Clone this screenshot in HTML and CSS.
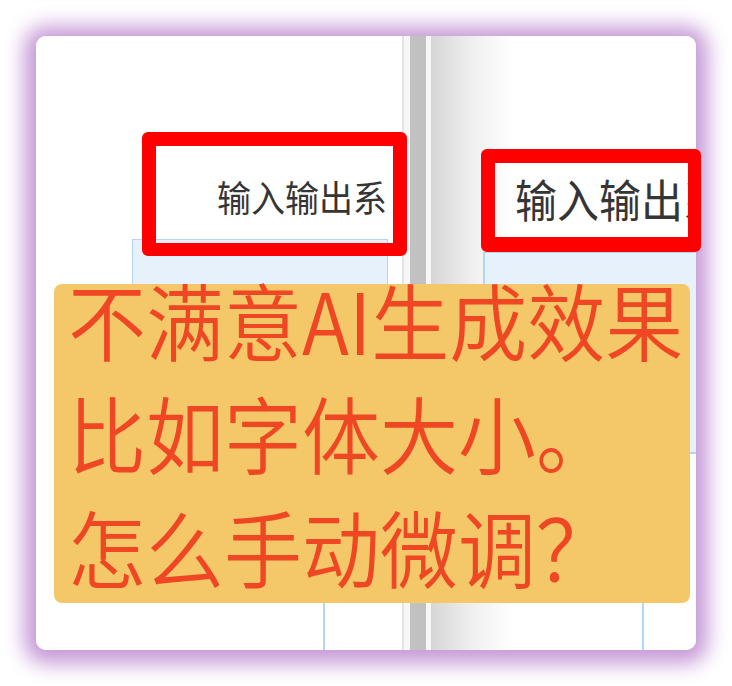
FILE: index.html
```html
<!DOCTYPE html>
<html lang="zh-CN">
<head>
<meta charset="utf-8">
<title>微调</title>
<link rel="stylesheet" href="styles.css">
</head>
<body>
<div class="stage">
  <div class="card">
    <div class="pane pane-left">
      <div class="head head-left">输入输出系统</div>
      <div class="cell cell-left"></div>
      <div class="col col-left"></div>
    </div>
    <div class="divider"></div>
    <div class="pane pane-right">
      <div class="head head-right">输入输出系统</div>
      <div class="cell cell-right"></div>
      <div class="col col-right"></div>
    </div>
  </div>
  <div class="mark mark-left"></div>
  <div class="mark mark-right"></div>
  <div class="note">
    <p class="note-text">不满意AI生成效果<br>比如字体大小。<br>怎么手动微调？</p>
  </div>
</div>
</body>
</html>
```

FILE: styles.css
```css
html, body {
  margin: 0;
  padding: 0;
  background: #ffffff;
}

.stage {
  position: relative;
  width: 732px;
  height: 686px;
  overflow: hidden;
  padding: 36px 0 0 36px;
  box-sizing: border-box;
  font-family: "Noto Sans CJK SC", "Noto Sans", sans-serif;
}

.card {
  width: 660px;
  height: 614px;
  background: #ffffff;
  border-radius: 10px;
  overflow: hidden;
  display: flex;
  box-shadow: 0 2px 20px 12px #c79bd8;
}

.pane {
  display: flex;
  flex-direction: column;
  overflow: hidden;
  flex: none;
}

.pane-left {
  width: 366px;
  background: #ffffff;
}

.pane-right {
  flex: 1;
  background: linear-gradient(to right, #d7d7d7 0, #efefef 40px, #ffffff 80px);
}

.divider {
  width: 30px;
  flex: none;
  background: linear-gradient(to right,
    #e4e4e4 0, #e4e4e4 2px,
    #f7f7f7 2px, #f7f7f7 8px,
    #c1c1c1 8px, #c1c1c1 24px,
    #f7f7f7 24px, #f7f7f7 29px,
    #d6d6d6 29px, #d6d6d6 30px);
}

.head {
  color: #353535;
  white-space: nowrap;
  flex: none;
  overflow: hidden;
  box-sizing: border-box;
  transform: scaleY(1.08);
  transform-origin: 0 0;
}

.head-left {
  font-size: 34px;
  line-height: 40px;
  margin-top: 139px;
  padding-left: 181px;
  width: 352px;
}

.head-right {
  font-size: 42px;
  line-height: 48px;
  margin-top: 137px;
  padding-left: 83px;
}

.cell {
  flex: none;
  background: #e7f1fb;
  border: 1px solid #b3d5f7;
  box-sizing: border-box;
}

.cell-left {
  margin-top: 24px;
  margin-left: 96px;
  width: 256px;
  height: 214px;
}

.cell-right {
  margin-top: 31px;
  margin-left: 51px;
  width: 300px;
  height: 202px;
  border-width: 1px 0 2px 2px;
}

.col {
  flex: 1;
  border-left: 2px solid #b3d5f7;
}

.col-left {
  margin-left: 287px;
}

.col-right {
  margin-left: 210px;
}

.mark {
  position: absolute;
  border: 14px solid #ff0000;
  border-radius: 6px;
  box-sizing: border-box;
}

.mark-left {
  left: 142px;
  top: 132px;
  width: 265px;
  height: 124px;
  border-bottom-width: 13px;
}

.mark-right {
  left: 481px;
  top: 149px;
  width: 220px;
  height: 103px;
  border-right-width: 13px;
  border-bottom-width: 15px;
}

.note {
  position: absolute;
  left: 54px;
  top: 284px;
  width: 636px;
  height: 319px;
  background: #f4c869;
  border-radius: 8px;
}

.note-text {
  margin: -22px 0 0 0;
  padding-left: 14px;
  font-size: 78px;
  font-weight: 350;
  line-height: 105px;
  color: #ef4723;
  white-space: nowrap;
  transform: scaleY(1.08);
  transform-origin: 0 0;
}
```
